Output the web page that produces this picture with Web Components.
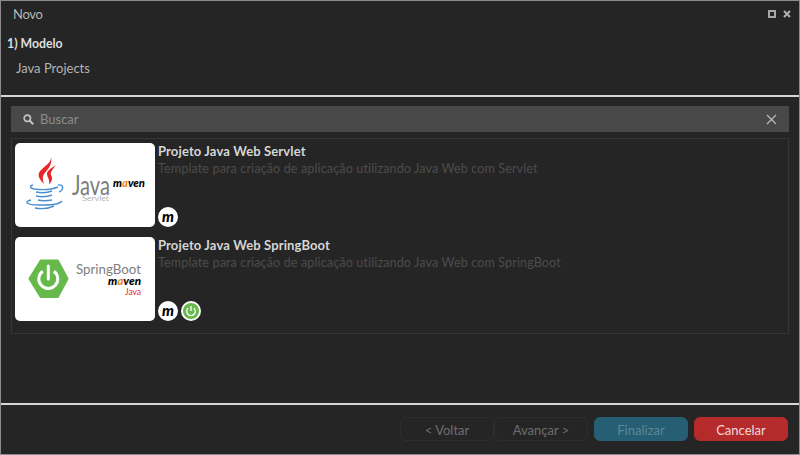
<!DOCTYPE html>
<html lang="pt">
<head>
<meta charset="utf-8">
<title>Novo</title>
<style>
  html, body { margin: 0; height: 100%; background: #252525; }
  body { font-family: "Lato", "Liberation Sans", sans-serif; color: #c8c8c8; overflow: hidden; }
</style>
</head>
<body>
<template id="dialog-template">
  <style>
    :host { display: flex; flex-direction: column; box-sizing: border-box; width: 800px; height: 455px; background: #252525; border: 1px solid #8a8a8a; }
    .title { display: flex; align-items: center; justify-content: space-between; height: 26px; padding: 0 8px 0 12px; font-size: 13px; letter-spacing: -.3px; color: #b4b4b4; }
    .wins { display: flex; align-items: center; gap: 7px; }
    .wins svg { display: block; }
    .head { height: 68px; padding: 8px 0 0 6px; box-sizing: border-box; }
    .step { font-size: 12.3px; font-weight: 700; color: #dedede; line-height: 17px; }
    .sub { font-size: 13px; color: #b4b4b4; margin: 8px 0 0 9px; line-height: 16px; }
    .rule { height: 2px; background: #d6d6d6; flex: none; }
    .body { flex: 1; padding: 9px 10px 0; display: flex; flex-direction: column; gap: 6px; }
    .foot { height: 49px; flex: none; display: flex; justify-content: flex-end; align-items: flex-start; padding: 12px 11px 0 0; box-sizing: border-box; }
  </style>
  <div class="title"><span>Novo</span>
    <span class="wins">
      <svg width="8" height="8" viewBox="0 0 8 8"><rect x="1" y="1" width="6" height="6" fill="none" stroke="#a8a8a8" stroke-width="2"/></svg>
      <svg width="8" height="8" viewBox="0 0 8 8"><path d="M1 1l6 6M7 1l-6 6" stroke="#b0b0b0" stroke-width="2"/></svg>
    </span>
  </div>
  <div class="head">
    <div class="step"><slot name="step"></slot></div>
    <div class="sub"><slot name="sub"></slot></div>
  </div>
  <div class="rule"></div>
  <div class="body"><slot></slot></div>
  <div class="rule"></div>
  <div class="foot"><slot name="actions"></slot></div>
</template>

<template id="search-template">
  <style>
    :host { display: flex; align-items: center; height: 26px; flex: none; background: #484848; color: #8c8c8c; font-size: 13px; padding: 0 12px; }
    span { flex: 1; margin-left: 6px; }
    svg { display: block; }
  </style>
  <svg width="11" height="11" viewBox="0 0 11 11"><circle cx="4.3" cy="4.3" r="3.2" fill="none" stroke="#c4c4c4" stroke-width="1.6"/><path d="M6.8 6.8l3.4 3.4" stroke="#c4c4c4" stroke-width="2"/></svg>
  <span>Buscar</span>
  <svg width="11" height="11" viewBox="0 0 11 11"><path d="M1 1l9 9M10 1l-9 9" stroke="#b8b8b8" stroke-width="1.3"/></svg>
</template>

<template id="list-template">
  <style>
    :host { display: flex; flex-direction: column; gap: 10px; height: 196px; box-sizing: border-box; border: 1px solid #363636; padding: 4px 3px; flex: none; }
  </style>
  <slot></slot>
</template>

<template id="card-template">
  <style>
    :host { display: flex; height: 84px; gap: 3px; }
    .logo { width: 140px; height: 84px; background: #fff; border-radius: 5px; flex: none; overflow: hidden; }
    .info { display: flex; flex-direction: column; min-width: 0; }
    .name { font-size: 13px; font-weight: 700; letter-spacing: .13px; color: #d6d6d6; line-height: 16px; }
    .desc { font-size: 12.6px; letter-spacing: .11px; color: #4c4c4c; line-height: 16px; margin-top: 2px; white-space: nowrap; }
    .tags { margin-top: auto; display: flex; gap: 3px; }
  </style>
  <div class="logo"><slot name="logo"></slot></div>
  <div class="info">
    <div class="name"><slot name="name"></slot></div>
    <div class="desc"><slot name="desc"></slot></div>
    <div class="tags"><slot name="tags"></slot></div>
  </div>
</template>

<template id="button-template">
  <style>
    :host { display: block; box-sizing: border-box; width: 94px; height: 24px; border-radius: 6px; font-size: 13px; line-height: 24px; text-align: center; color: #6e6e6e; border: 1px solid #2e2e2e; }
    :host([kind=primary]) { background: #265e73; border-color: #265e73; color: #5f8796; }
    :host([kind=danger]) { background: #b52a2a; border-color: #b52a2a; color: #f0dcdc; }
  </style>
  <slot></slot>
</template>

<template id="badge-template">
  <style>
    :host { display: block; width: 20px; height: 20px; border-radius: 50%; background: #fff; }
    svg { display: block; }
    span { display: block; text-align: center; font: italic 900 15px/19px "Lato", "Liberation Sans", sans-serif; color: #000; }
  </style>
</template>

<nv-dialog>
  <span slot="step">1) Modelo</span>
  <span slot="sub">Java Projects</span>
  <nv-search></nv-search>
  <nv-list>
    <nv-card>
      <svg slot="logo" width="140" height="84" viewBox="0 0 140 84" style="display:block">
        <path d="M36 13C37 19 31 22 26 27C22 31 23 35 29 41C28 37 27 34 29 31C32 27 38 22 36 13Z" fill="#e8262a"/>
        <path d="M41 22C37 25 32 27 32 31C32 34 35 36 34 41C37 39 38 35 36 32C35 30 37 27 41 22Z" fill="#e8262a"/>
        <g fill="none" stroke="#4b8fd2" stroke-width="1.4">
          <path d="M18 42C14 43 15 45 19 46C27 47 36 47 43 44"/>
          <path d="M43 42C49 41 49 47 44 49"/>
          <path d="M21 49C26 50 32 50 37 48"/>
          <path d="M21 53C26 54 32 54 37 52"/>
          <path d="M23 57C27 58 32 58 37 57"/>
          <path d="M16 57C8 59 12 62 24 62C34 62 44 62 47 58"/>
          <path d="M20 65C26 66 33 66 39 63"/>
        </g>
        <text x="57" y="52" font-family="Lato, sans-serif" font-size="27" fill="#7c7c7c" textLength="38" lengthAdjust="spacingAndGlyphs">Java</text>
        <text x="98" y="44" font-family="Lato, sans-serif" font-size="12" font-weight="900" font-style="italic" fill="#000" textLength="32" lengthAdjust="spacingAndGlyphs">m<tspan fill="#f08a1c">a</tspan>ven</text>
        <text x="67" y="58" font-family="Lato, sans-serif" font-size="7.5" fill="#b4b4b4" textLength="27" lengthAdjust="spacingAndGlyphs">Servlet</text>
      </svg>
      <span slot="name">Projeto Java Web Servlet</span>
      <span slot="desc">Template para criação de aplicação utilizando Java Web com Servlet</span>
      <nv-badge slot="tags" type="maven"></nv-badge>
    </nv-card>
    <nv-card>
      <svg slot="logo" width="140" height="84" viewBox="0 0 140 84" style="display:block">
        <path d="M26 24H42.500L52 41.700L42.500 59.500H26L15 41.700Z" fill="#66b94a" stroke="#66b94a" stroke-width="3" stroke-linejoin="round"/>
        <path d="M27.800 34.200A9.500 9.500 0 1 0 38.800 34.200" fill="none" stroke="#fff" stroke-width="3"/>
        <path d="M33.300 29V42" stroke="#fff" stroke-width="3" stroke-linecap="round"/>
        <text x="61" y="36.700" font-family="Lato, sans-serif" font-size="14" fill="#808080" textLength="65" lengthAdjust="spacingAndGlyphs">SpringBoot</text>
        <text x="93" y="48" font-family="Lato, sans-serif" font-size="12" font-weight="900" font-style="italic" fill="#000" textLength="33" lengthAdjust="spacingAndGlyphs">m<tspan fill="#f08a1c">a</tspan>ven</text>
        <text x="110" y="58" font-family="Lato, sans-serif" font-size="10" fill="#e8262a" textLength="16" lengthAdjust="spacingAndGlyphs">Java</text>
      </svg>
      <span slot="name">Projeto Java Web SpringBoot</span>
      <span slot="desc">Template para criação de aplicação utilizando Java Web com SpringBoot</span>
      <nv-badge slot="tags" type="maven"></nv-badge>
      <nv-badge slot="tags" type="spring"></nv-badge>
    </nv-card>
  </nv-list>
  <nv-button slot="actions">&lt; Voltar</nv-button>
  <nv-button slot="actions">Avançar &gt;</nv-button>
  <nv-button slot="actions" kind="primary" style="margin-left:6px">Finalizar</nv-button>
  <nv-button slot="actions" kind="danger" style="margin-left:6px">Cancelar</nv-button>
</nv-dialog>

<script>
function define(tag, templateId, setup) {
    customElements.define(tag, class extends HTMLElement {
        constructor() {
            super();
            this.attachShadow({ mode: 'open' });
            this.shadowRoot.appendChild(document.getElementById(templateId).content.cloneNode(true));
        }
        connectedCallback() {
            if (setup) setup(this);
        }
    });
}

define('nv-dialog', 'dialog-template');
define('nv-search', 'search-template');
define('nv-list', 'list-template');
define('nv-card', 'card-template');
define('nv-button', 'button-template');
define('nv-badge', 'badge-template', el => {
    const holder = document.createElement('div');
    if (el.getAttribute('type') === 'spring') {
        holder.innerHTML = '<svg width="20" height="20" viewBox="0 0 20 20"><circle cx="10" cy="10" r="8" fill="#66b94a"/><path d="M7.300 7a4.300 4.300 0 1 0 5.400 0" fill="none" stroke="#fff" stroke-width="1.300"/><path d="M10 5v5" stroke="#fff" stroke-width="1.300"/></svg>';
    } else {
        holder.innerHTML = '<span>m</span>';
    }
    el.shadowRoot.appendChild(holder.firstChild);
});
</script>
</body>
</html>
